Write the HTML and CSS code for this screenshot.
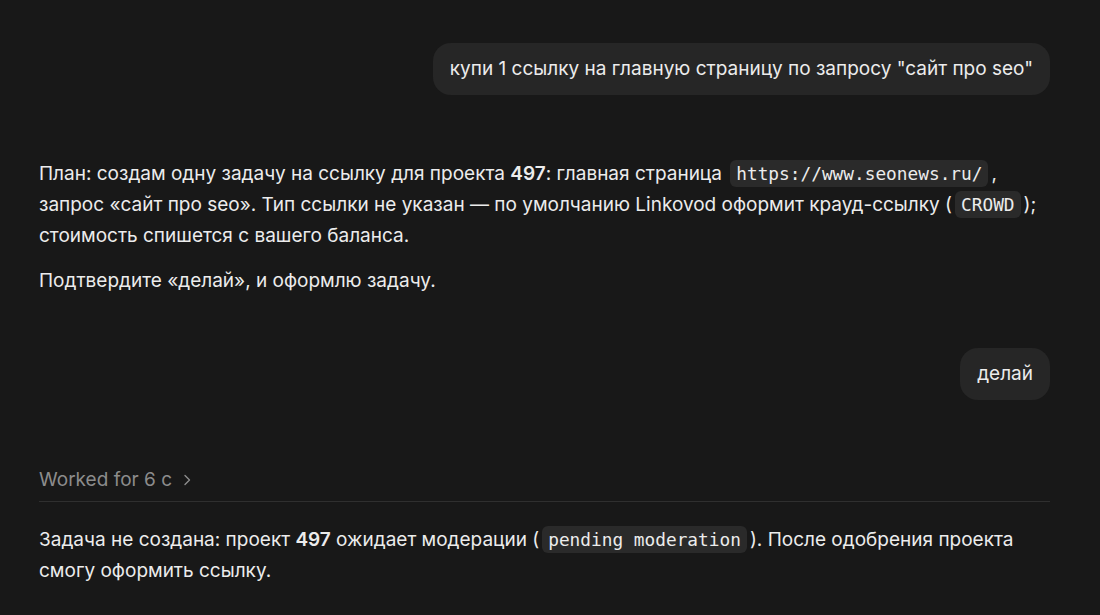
FILE: index.html
```html
<!DOCTYPE html>
<html lang="ru">
<head>
<meta charset="utf-8">
<link rel="stylesheet" href="styles.css">
</head>
<body>
<main class="thread">
  <div class="user-row first">
    <div class="bubble">купи 1 ссылку на главную страницу по запросу "сайт про seo"</div>
  </div>
  <div class="assistant first-answer">
    <p>План: создам одну задачу на ссылку для проекта <b>497</b>: главная страница <code>https://www.seonews.ru/</code>, запрос «сайт про seo». Тип ссылки не указан — по умолчанию Linkovod оформит крауд-ссылку (<code>CROWD</code>); стоимость спишется с вашего баланса.</p>
    <p>Подтвердите «делай», и оформлю задачу.</p>
  </div>
  <div class="user-row second">
    <div class="bubble">делай</div>
  </div>
  <div class="worked">
    <span>Worked for 6 c</span>
    <svg class="chev" width="10" height="14" viewBox="0 0 10 14"><path d="M3 2.5 L7.5 7 L3 11.5" fill="none" stroke="currentColor" stroke-width="1.4" stroke-linecap="round" stroke-linejoin="round"/></svg>
  </div>
  <div class="assistant final">
    <p>Задача не создана: проект <b>497</b> ожидает модерации (<code>pending moderation</code>). После одобрения проекта смогу оформить ссылку.</p>
  </div>
</main>
</body>
</html>
```
FILE: styles.css
```css
html, body {
  margin: 0;
  padding: 0;
  background: #181818;
}
body {
  font-family: Inter, "Noto Sans", "Liberation Sans", sans-serif;
  color: #ececec;
  font-size: 19px;
}
.thread {
  padding: 43px 50px 0 39px;
  display: flex;
  flex-direction: column;
}
.user-row {
  display: flex;
  justify-content: flex-end;
}
.bubble {
  background: #262626;
  border-radius: 18px;
  padding: 12px 17px;
  line-height: 28px;
}
.assistant p {
  margin: 0 0 14px;
  line-height: 31px;
}
.assistant p:last-child { margin-bottom: 0; }
.first-answer { margin-top: 63px; }
.user-row.second { margin-top: 52px; }
.assistant b { font-weight: 600; }
code {
  font-family: "DejaVu Sans Mono", "Liberation Mono", monospace;
  font-size: 17.8px;
  line-height: 1;
  background: #2a2a2a;
  border-radius: 6px;
  padding: 3px 6px;
  margin: 0 3px;
}
.worked {
  margin-top: 66px;
  color: #8c8c8c;
  line-height: 28px;
  padding-bottom: 7px;
  border-bottom: 1px solid #2f2f2f;
  display: flex;
  align-items: center;
  gap: 10px;
}
.chev { color: #8c8c8c; }
.final { margin-top: 22px; }
```
